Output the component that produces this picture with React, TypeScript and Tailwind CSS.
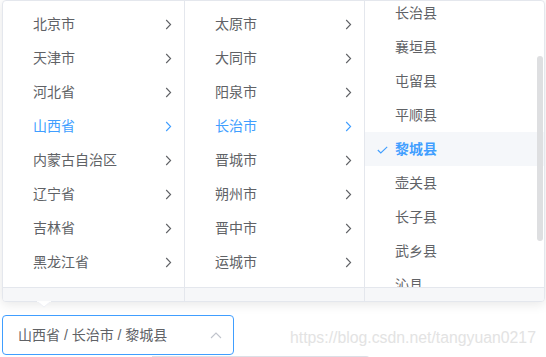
import React, { useLayoutEffect, useRef } from "react";

const FONT = { fontFamily: '"Liberation Sans", "Noto Sans CJK SC", sans-serif' };

function ArrowRight({ active }: { active?: boolean }) {
  return (
    <svg width="7" height="11" viewBox="0 0 7 11" className="absolute right-[12px] top-[12px]">
      <path d="M1.2 1 L5.6 5.5 L1.2 10" fill="none" stroke={active ? "#409eff" : "#606266"} strokeWidth="1.1" />
    </svg>
  );
}

type Item = { label: string; path?: boolean; active?: boolean };

function Node({ item, leaf }: { item: Item; leaf?: boolean }) {
  const color = item.active || item.path ? "text-[#409eff]" : "text-[#606266]";
  return (
    <li
      className={`relative h-[34px] leading-[34px] pl-[20px] pr-[30px] text-[14px] list-none ${color} ${
        item.active ? "bg-[#f5f7fa] font-bold" : ""
      }`}
    >
      {item.active && (
        <svg width="11" height="8" viewBox="0 0 11 8" className="absolute left-[12px] top-[14px]">
          <path d="M0.8 4 L3.8 7 L10.2 0.8" fill="none" stroke="#409eff" strokeWidth="1.1" />
        </svg>
      )}
      <span className="px-[10px]">{item.label}</span>
      {!leaf && <ArrowRight active={item.path} />}
    </li>
  );
}

function Column({
  items,
  leaf,
  width,
  last,
  scrollTop,
}: {
  items: Item[];
  leaf?: boolean;
  width: string;
  last?: boolean;
  scrollTop?: number;
}) {
  const ref = useRef<HTMLDivElement>(null);
  useLayoutEffect(() => {
    if (ref.current && scrollTop) ref.current.scrollTop = scrollTop;
  }, [scrollTop]);
  return (
    <div className={`relative flex flex-col ${width} ${last ? "" : "border-r border-[#e4e7ed]"}`}>
      <div ref={ref} className="h-[286px] overflow-y-auto [scrollbar-width:none]">
        <ul className="m-0 p-0 pt-[6px] pb-[6px]">
          {items.map((it) => (
            <Node key={it.label} item={it} leaf={leaf} />
          ))}
        </ul>
      </div>
      {last && (
        <div className="absolute right-[1px] top-[55px] w-[6px] h-[185px] rounded-[3px] bg-[#dedfe1]" />
      )}
      <div className="h-[14px] border-t border-[#e4e7ed] bg-[#f6f7f9]" />
    </div>
  );
}

export default function App() {
  const provinces: Item[] = [
    { label: "北京市" },
    { label: "天津市" },
    { label: "河北省" },
    { label: "山西省", path: true },
    { label: "内蒙古自治区" },
    { label: "辽宁省" },
    { label: "吉林省" },
    { label: "黑龙江省" },
  ];
  const cities: Item[] = [
    { label: "太原市" },
    { label: "大同市" },
    { label: "阳泉市" },
    { label: "长治市", path: true },
    { label: "晋城市" },
    { label: "朔州市" },
    { label: "晋中市" },
    { label: "运城市" },
  ];
  const counties: Item[] = [
    { label: "城区" },
    { label: "郊区" },
    { label: "长治县" },
    { label: "襄垣县" },
    { label: "屯留县" },
    { label: "平顺县" },
    { label: "黎城县", active: true },
    { label: "壶关县" },
    { label: "长子县" },
    { label: "武乡县" },
    { label: "沁县" },
    { label: "沁源县" },
    { label: "潞城市" },
  ];

  return (
    <div className="relative w-[546px] h-[357px] bg-white overflow-hidden" style={FONT}>
      <div className="pl-[2px] pr-[1px]">
        <div className="relative flex bg-white border border-[#e4e7ed] rounded-[4px] shadow-[0_2px_12px_0_rgba(0,0,0,0.1)] overflow-hidden">
          <Column items={provinces} width="w-[182px]" />
          <Column items={cities} width="w-[180px]" />
          <Column items={counties} leaf last width="flex-1" scrollTop={79} />
        </div>
      </div>

      <svg width="14" height="7" viewBox="0 0 14 7" className="absolute left-[37px] top-[301px]">
        <path d="M0 0 L7 6 L14 0 Z" fill="#ffffff" stroke="#ebeef5" strokeWidth="0.8" />
        <path d="M0 0.2 L14 0.2" stroke="#ffffff" strokeWidth="1.2" />
      </svg>

      <div className="mt-[13px] ml-[2px] w-[232px] h-[40px] border border-[#409eff] rounded-[4px] flex items-center pl-[15px] pr-[10px] justify-between">
        <span className="text-[14px] text-[#606266] leading-[38px]">山西省 / 长治市 / 黎城县</span>
        <svg width="12" height="7" viewBox="0 0 12 7" className="mr-[1px]">
          <path d="M1 6 L6 1 L11 6" fill="none" stroke="#c0c4cc" strokeWidth="1.1" />
        </svg>
      </div>
      <div className="ml-[152px] mt-[1px] w-[218px] h-[4px] border-t border-r border-[#dcdfe6] rounded-tr-[4px]" />

      <div
        className="absolute left-[290px] top-[328px] text-[15.8px] leading-[20px] text-[#e3e3e3]"
        style={{ fontFamily: '"Liberation Sans", Arial, sans-serif' }}
      >
        https://blog.csdn.net/tangyuan0217
      </div>
    </div>
  );
}
